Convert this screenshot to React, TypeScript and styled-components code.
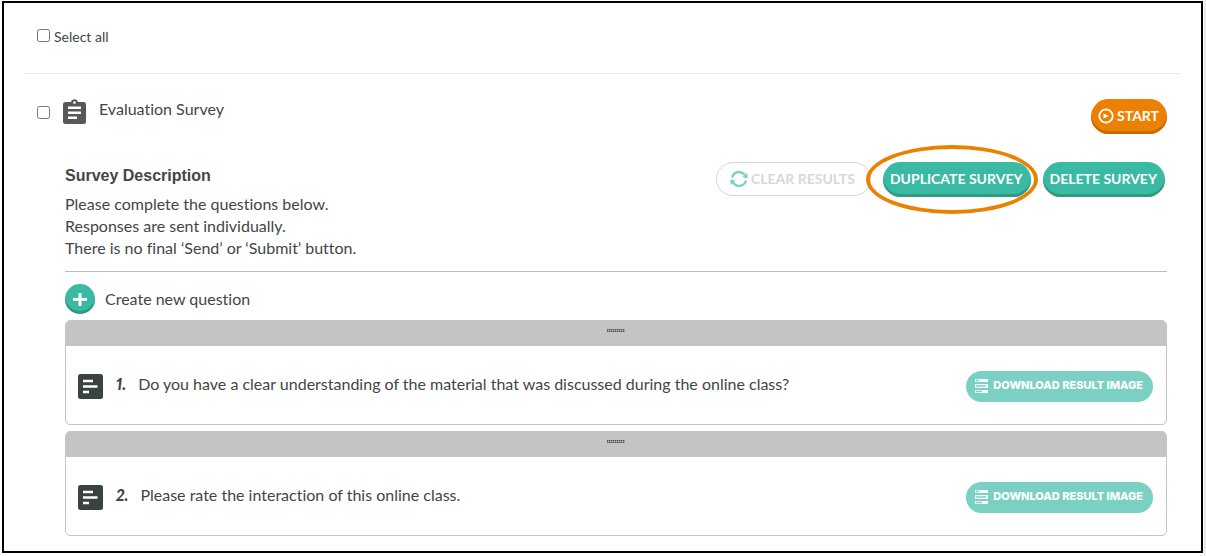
import React from 'react';
import styled, { createGlobalStyle, css } from 'styled-components';

const GlobalStyle = createGlobalStyle`
  *, *::before, *::after { box-sizing: border-box; }
  body {
    margin: 0;
    background: #fff;
    color: #3f4745;
    font-family: Lato, "Liberation Sans", sans-serif;
    font-size: 16px;
    font-variant-ligatures: none;
    line-height: 22px;
  }
  button { font-family: inherit; cursor: pointer; }
  h2, p, ol { margin: 0; padding: 0; }
`;

const Page = styled.div`
  padding: 1px 1px 3px 2px;
  border-right: 2px solid #e9e9e9;
`;

const Frame = styled.main`
  border: 2px solid #000;
  padding-bottom: 15px;
`;

const Checkbox = styled.input`
  flex: none;
  width: 13px;
  height: 13px;
  margin: 0;
`;

const SelectAll = styled.label`
  display: flex;
  align-items: flex-start;
  gap: 4px;
  margin: 0 22px 0 20px;
  padding: 26px 13px 28px;
  border-bottom: 1px solid #e6e6e6;
  font-size: 14px;
  line-height: 16px;
`;

const SurveyHeader = styled.header`
  display: flex;
  align-items: flex-start;
  justify-content: space-between;
  padding: 25px 34px 28px 33px;
`;

const SurveyName = styled.label`
  display: flex;
  align-items: flex-start;
  gap: 13px;
  line-height: 20px;

  ${Checkbox} { margin-top: 7px; }
`;

const SurveyBody = styled.section`
  padding: 0 34px 0 61px;
`;

const Summary = styled.div`
  display: flex;
  align-items: flex-start;
  justify-content: space-between;
  padding-bottom: 12px;
  border-bottom: 1px solid #bdbdbd;
`;

const Heading = styled.h2`
  margin-bottom: 3px;
  font: bold 16px/28px "Liberation Sans", sans-serif;
`;

const Actions = styled.div`
  display: flex;
  gap: 12px;
  padding-right: 2px;
`;

const tones = {
  teal: css`background: #3ab9a3; box-shadow: inset 0 -3px 0 #309985;`,
  orange: css`background: #ec8000; box-shadow: inset 0 -3px 0 #c86c00;`,
};

const PillButton = styled.button<{ $tone: keyof typeof tones }>`
  display: flex;
  align-items: center;
  justify-content: center;
  gap: 3px;
  height: 35px;
  padding: 0 8px 2px 7px;
  border: 0;
  border-radius: 18px;
  color: #fff;
  font-size: 14px;
  font-weight: 700;
  white-space: nowrap;
  ${({ $tone }) => tones[$tone]}
`;

const GhostButton = styled.button`
  display: flex;
  align-items: center;
  gap: 3px;
  height: 34px;
  padding: 0 15px 2px 13px;
  border: 1px solid #d6d6d6;
  border-radius: 17px;
  background: #fff;
  color: #d8d8d8;
  font-size: 14px;
  font-weight: 700;
  white-space: nowrap;
`;

const Highlight = styled.div`
  position: relative;

  &::after {
    content: "";
    position: absolute;
    inset: -17px -7px -17px -17px;
    border: 4px solid #ec8000;
    border-radius: 50%;
    pointer-events: none;
  }
`;

const CreateRow = styled.label`
  display: flex;
  align-items: center;
  gap: 10px;
  width: fit-content;
  padding: 12px 0 6px;
`;

const RoundButton = styled.button`
  display: grid;
  place-items: center;
  width: 30px;
  height: 30px;
  padding: 0;
  border: 0;
  border-radius: 50%;
  background: #3ab9a3;
  box-shadow: inset 0 -3px 0 #309985;
`;

const QuestionList = styled.ol`
  display: grid;
  gap: 6px;
  list-style: none;
`;

const Card = styled.li`
  border: 1px solid #c4c4c4;
  border-radius: 5px;
  overflow: hidden;
`;

const DragBar = styled.div`
  display: flex;
  justify-content: center;
  height: 25px;
  padding-top: 8px;
  background: #c4c4c4;
`;

const Question = styled.div`
  display: flex;
  align-items: center;
  height: 78px;
  padding: 2px 13px 0 12px;
`;

const QuestionNumber = styled.span`
  margin: 0 12px 4px 13px;
  font-style: italic;
  font-weight: 900;
  font-variant-numeric: proportional-nums;
`;

const QuestionText = styled.p`
  flex: 1;
  margin-bottom: 4px;
`;

const DownloadButton = styled.button`
  display: flex;
  align-items: center;
  gap: 5px;
  height: 31px;
  padding: 0 10px 2px 9px;
  border: 0;
  border-radius: 16px;
  background: #7ad1c3;
  color: #fff;
  font-family: Inter, "Liberation Sans", sans-serif;
  font-size: 11px;
  font-weight: 800;
  white-space: nowrap;
`;

const ClipboardIcon = () => (
  <svg width="23" height="26" viewBox="0 0 23 26" aria-hidden="true">
    <path
      fill="#585858"
      fillRule="evenodd"
      d="M2.5 3H8a3.6 3.6 0 0 1 7 0h5.500a2.500 2.500 0 0 1 2.500 2.500v17a2.500 2.500 0 0 1-2.500 2.500h-18A2.500 2.500 0 0 1 0 22.500v-17A2.500 2.500 0 0 1 2.500 3zM11.500 2.300a1.300 1.300 0 1 0 0 2.600 1.300 1.300 0 0 0 0-2.600zM5 7.500v2.500h13V7.500zM5 12.500V15h13v-2.500zM5 17.500V20h9v-2.500z"
    />
  </svg>
);

const PlayIcon = () => (
  <svg width="16" height="16" viewBox="0 0 16 16" aria-hidden="true">
    <circle cx="8" cy="8" r="6.700" fill="none" stroke="#fff" strokeWidth="1.800" />
    <path d="M5.500 5.500 11 8l-5.500 2.500z" fill="#fff" />
  </svg>
);

const RefreshIcon = () => (
  <svg width="18" height="17" viewBox="0 0 18 17" aria-hidden="true">
    <g fill="none" stroke="#7ad1c3" strokeWidth="2.300">
      <path d="M2 7.500C4 1 12 .5 15 5.500" />
      <path d="M16 10.500C14 17 6 17.500 3 12.500" />
    </g>
    <path d="M17.500 3v5.500L12.500 7.200zM.5 15V9.500l5 1.300z" fill="#7ad1c3" />
  </svg>
);

const PlusIcon = () => (
  <svg width="14" height="14" viewBox="0 0 14 14" aria-hidden="true">
    <path d="M7 1v13M0 7.500h14" stroke="#fff" strokeWidth="3" />
  </svg>
);

const AnswerIcon = () => (
  <svg width="25" height="25" viewBox="0 0 25 25" aria-hidden="true">
    <rect width="25" height="25" rx="2.500" fill="#3a4341" />
    <path d="M5 7h10M5 12.500h14.500M5 18h6" stroke="#fff" strokeWidth="2.500" />
  </svg>
);

const ResultsIcon = () => (
  <svg width="13" height="15" viewBox="0 0 13 15" aria-hidden="true">
    <path d="M0 1h13v3H0zM0 6h13v4H0zM0 12h13v3H0z" fill="#fff" />
    <path d="M1 2.500h3M1 8h10M1 13.500h6" stroke="#7ad1c3" strokeWidth="1.300" />
  </svg>
);

const GripIcon = () => (
  <svg width="18" height="3" viewBox="0 0 18 3" aria-hidden="true">
    <path d="M0 .5h18M0 2.500h18" stroke="#505050" strokeDasharray="1 1" />
    <path d="M1 .5h17M1 2.500h17M0 1.500h18" stroke="#888" strokeDasharray="1 1" />
  </svg>
);

const questions = [
  'Do you have a clear understanding of the material that was discussed during the online class?',
  'Please rate the interaction of this online class.',
];

export default function App() {
  return (
    <Page>
      <GlobalStyle />
      <Frame>
        <SelectAll>
          <Checkbox type="checkbox" />
          Select all
        </SelectAll>
        <SurveyHeader>
          <SurveyName>
            <Checkbox type="checkbox" />
            <ClipboardIcon />
            Evaluation Survey
          </SurveyName>
          <PillButton type="button" $tone="orange">
            <PlayIcon />
            START
          </PillButton>
        </SurveyHeader>
        <SurveyBody>
          <Summary>
            <div>
              <Heading>Survey Description</Heading>
              <p>Please complete the questions below.</p>
              <p>Responses are sent individually.</p>
              <p>There is no final ‘Send’ or ‘Submit’ button.</p>
            </div>
            <Actions>
              <GhostButton type="button">
                <RefreshIcon />
                CLEAR RESULTS
              </GhostButton>
              <Highlight>
                <PillButton type="button" $tone="teal">DUPLICATE SURVEY</PillButton>
              </Highlight>
              <PillButton type="button" $tone="teal">DELETE SURVEY</PillButton>
            </Actions>
          </Summary>
          <CreateRow htmlFor="create-question">
            <RoundButton type="button" id="create-question">
              <PlusIcon />
            </RoundButton>
            Create new question
          </CreateRow>
          <QuestionList>
            {questions.map((text, index) => (
              <Card key={text}>
                <DragBar>
                  <GripIcon />
                </DragBar>
                <Question>
                  <AnswerIcon />
                  <QuestionNumber>{index + 1}.</QuestionNumber>
                  <QuestionText>{text}</QuestionText>
                  <DownloadButton type="button">
                    <ResultsIcon />
                    DOWNLOAD RESULT IMAGE
                  </DownloadButton>
                </Question>
              </Card>
            ))}
          </QuestionList>
        </SurveyBody>
      </Frame>
    </Page>
  );
}
